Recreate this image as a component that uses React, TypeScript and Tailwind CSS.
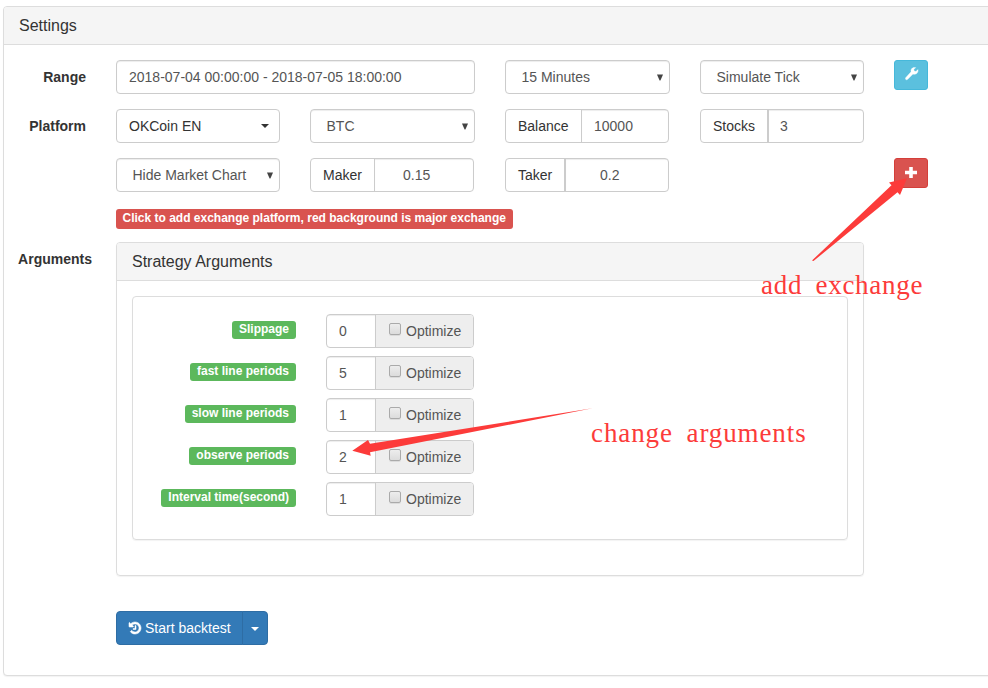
import React from 'react';

const control =
  'flex h-[34px] items-center rounded border border-[#ccc] bg-white text-[#555] shadow-[inset_0_1px_1px_rgba(0,0,0,0.075)]';

function Select({ value, className = '' }: { value: string; className?: string }) {
  return (
    <div className={`${control} justify-between pl-[15.5px] pr-[6px] ${className}`}>
      <span>{value}</span>
      <svg width="6" height="7" viewBox="0 0 6 7" className="mt-px block">
        <path d="M0 0.5h6L3.4 6.5h-.8z" fill="#444" />
      </svg>
    </div>
  );
}

function Group({
  label,
  value,
  className,
  addon,
  input,
}: {
  label: string;
  value: string;
  className: string;
  addon: string;
  input: string;
}) {
  return (
    <div className={`flex h-[34px] overflow-hidden rounded border border-[#ccc] bg-white ${className}`}>
      <div className={`flex shrink-0 items-center border-[#ccc] pl-[12px] text-[#333] ${addon}`}>{label}</div>
      <div
        className={`flex flex-1 items-center text-[#555] shadow-[inset_0_1px_1px_rgba(0,0,0,0.075)] ${input}`}
      >
        {value}
      </div>
    </div>
  );
}

function RowLabel({ children, className = 'pr-[30px]' }: { children?: React.ReactNode; className?: string }) {
  return <div className={`w-28 shrink-0 pt-[7px] text-right font-bold leading-5 ${className}`}>{children}</div>;
}

function Argument({ name, value }: { name: string; value: string }) {
  return (
    <div className="flex h-[34px]">
      <div className="flex w-[163px] justify-end pt-[7px]">
        <span className="h-[18px] rounded-[3px] bg-[#5cb85c] px-[7px] text-[12px] font-bold leading-[16px] text-white">
          {name}
        </span>
      </div>
      <div className="ml-[30px] flex w-[148px] overflow-hidden rounded border border-[#ccc]">
        <div className="flex w-12 items-center pl-[12px] text-[#555] shadow-[inset_0_1px_1px_rgba(0,0,0,0.075)]">
          {value}
        </div>
        <div className="flex flex-1 items-center border-l border-[#ccc] bg-[#eee] pl-[13px] text-[#555]">
          <span className="mr-[5px] -mt-[5px] h-3 w-3 rounded-[2px] border border-[#aaa] bg-linear-to-b from-[#ededed] to-[#dcdcdc] shadow-[0_1px_0_rgba(0,0,0,0.08)]" />
          Optimize
        </div>
      </div>
    </div>
  );
}

const args = [
  { name: 'Slippage', value: '0' },
  { name: 'fast line periods', value: '5' },
  { name: 'slow line periods', value: '1' },
  { name: 'observe periods', value: '2' },
  { name: 'Interval time(second)', value: '1' },
];

export default function App() {
  return (
    <div className="relative h-[688px] w-[988px] overflow-hidden bg-white pl-[3px] pt-[6px] font-['Liberation_Sans',Arial,sans-serif] text-[14px] leading-5 text-[#333]">
      <section className="h-[670px] w-[1000px] rounded border border-[#ddd] bg-white shadow-[0_1px_1px_rgba(0,0,0,0.05)]">
        <h1 className="flex h-[38px] items-center rounded-t-[3px] border-b border-[#ddd] bg-[#f5f5f5] pl-[15px] text-[16px]">
          Settings
        </h1>

        <div className="mt-[15px] flex flex-col gap-[15px]">
          <div className="flex">
            <RowLabel>Range</RowLabel>
            <div className={`${control} w-[359px] pl-3`}>2018-07-04 00:00:00 - 2018-07-05 18:00:00</div>
            <Select value="15 Minutes" className="ml-[30px] w-[165px]" />
            <Select value="Simulate Tick" className="ml-[30px] w-[164px]" />
            <button className="ml-[30px] flex h-[30px] w-[34px] items-center justify-center rounded-[3px] border border-[#46b8da] bg-[#5bc0de]">
              <svg width="14" height="14" viewBox="0 0 14 14" className="-mt-[3px] ml-px">
                <path
                  d="M12.9 2.6 10.9 4.6 9.2 4.1 8.8 2.6 10.7.6C9.1.1 7.4.6 6.5 1.9 5.9 2.8 5.8 3.9 6.1 4.8L.9 10.4C.3 11 .3 11.8.8 12.4 1.4 12.9 2.2 12.8 2.7 12.3L8 7.1C9.2 7.6 10.7 7.3 11.7 6.5 12.9 5.5 13.3 4 12.9 2.6Z"
                  fill="#fff"
                  stroke="#fff"
                  strokeWidth="0.4"
                />
              </svg>
            </button>
          </div>

          <div className="flex">
            <RowLabel>Platform</RowLabel>
            <div className="flex h-[34px] w-[164px] items-center justify-between rounded border border-[#ccc] pl-3 pr-[10px]">
              <span>OKCoin EN</span>
              <span className="border-x-4 border-t-4 border-x-transparent border-t-[#333]" />
            </div>
            <Select value="BTC" className="ml-[30px] w-[165px]" />
            <Group label="Balance" value="10000" className="ml-[30px] w-[164px]" addon="w-[76px] border-r" input="pl-3" />
            <Group label="Stocks" value="3" className="ml-[31px] w-[164px]" addon="w-[68px] border-r-2" input="pl-[11px]" />
          </div>

          <div className="flex">
            <RowLabel />
            <Select value="Hide Market Chart" className="w-[164px]" />
            <Group label="Maker" value="0.15" className="ml-[30px] w-[164px]" addon="w-16 border-r" input="pl-7" />
            <Group label="Taker" value="0.2" className="ml-[31px] w-[164px]" addon="w-[60px] border-r-2" input="pl-[34px]" />
            <button className="ml-[225px] flex h-[30px] w-[34px] items-center justify-center rounded-[3px] border border-[#d43f3a] bg-[#d9534f]">
              <svg width="12" height="11" viewBox="0 0 12 11" className="-mt-px">
                <path d="M4.2 0h3.6v3.8H12v3.4H7.800V11H4.2V7.2H0V3.8h4.2z" fill="#fff" />
              </svg>
            </button>
          </div>
        </div>

        <div className="mt-[17px] flex pl-28">
          <span className="h-5 w-[397px] whitespace-nowrap rounded-[3px] bg-[#d9534f] pl-[6.5px] text-[12px] font-bold leading-[18px] text-white">
            Click to add exchange platform, red background is major exchange
          </span>
        </div>

        <div className="mt-[13px] flex">
          <RowLabel className="pr-6">Arguments</RowLabel>
          <section className="h-[334px] w-[748px] rounded border border-[#ddd] shadow-[0_1px_1px_rgba(0,0,0,0.05)]">
            <h2 className="flex h-[38px] items-center rounded-t-[3px] border-b border-[#ddd] bg-[#f5f5f5] pl-[15px] text-[16px]">
              Strategy Arguments
            </h2>
            <div className="ml-[15px] mt-[15px] flex h-[244px] w-[716px] flex-col gap-2 rounded border border-[#ddd] pt-[17px] shadow-[0_1px_1px_rgba(0,0,0,0.05)]">
              {args.map((arg) => (
                <Argument key={arg.name} {...arg} />
              ))}
            </div>
          </section>
        </div>

        <div className="mt-[35px] flex pl-28">
          <button className="flex h-[34px] w-[127px] items-center rounded-l border border-[#2e6da4] bg-[#337ab7] pl-3 text-white">
            <svg width="12" height="14" viewBox="0 0 1536 1792" className="mr-1 overflow-visible">
              <path
                fill="#fff"
                stroke="#fff"
                strokeWidth="70"
                d="M1536 896q0 156-61 298t-164 245-245 164-298 61q-172 0-327-72.500t-264-204.500q-7-10-6.500-22.500t8.500-20.500l137-138q10-9 25-9 16 2 23 12 73 95 179 147t225 52q104 0 198.500-40.500t163.500-109.500 109.500-163.500 40.500-198.500-40.500-198.500-109.500-163.500-163.500-109.500-198.500-40.500q-98 0-188 35.500t-160 101.500l137 138q31 30 14 69-17 40-59 40h-448q-26 0-45-19t-19-45v-448q0-42 40-59 39-17 69 14l130 129q107-101 244.500-156.500t284.500-55.500q156 0 298 61t245 164 164 245 61 298zm-640-288v448q0 14-9 23t-23 9h-320q-14 0-23-9t-9-23v-64q0-14 9-23t23-9h224v-352q0-14 9-23t23-9h64q14 0 23 9t9 23z"
              />
            </svg>
            Start backtest
          </button>
          <button className="-ml-px flex h-[34px] w-[26px] items-center justify-center rounded-r border border-[#2e6da4] bg-[#337ab7]">
            <span className="mt-px border-x-4 border-t-4 border-x-transparent border-t-white" />
          </button>
        </div>
      </section>

      <svg className="pointer-events-none absolute inset-0" width="988" height="688" viewBox="0 0 988 688">
        <path d="M812 260.500 891.500 185.200 889 182.500 907 178.300 900 195 897.500 192.300 813.500 261Z" fill="#fc3b3a" />
        <path d="M592.500 408.300 370 443.700 368 440 352.300 450.700 370.700 455.700 370 452.300Z" fill="#fc3b3a" />
      </svg>
      <span className="absolute left-[761px] top-[270px] whitespace-nowrap font-['Liberation_Serif',serif] text-[27px] leading-[30px] tracking-[0.7px] text-[#fc3b3a] [word-spacing:6px]">
        add exchange
      </span>
      <span className="absolute left-[591px] top-[418px] whitespace-nowrap font-['Liberation_Serif',serif] text-[27px] leading-[30px] tracking-[0.9px] text-[#fc3b3a] [word-spacing:6px]">
        change arguments
      </span>
    </div>
  );
}
